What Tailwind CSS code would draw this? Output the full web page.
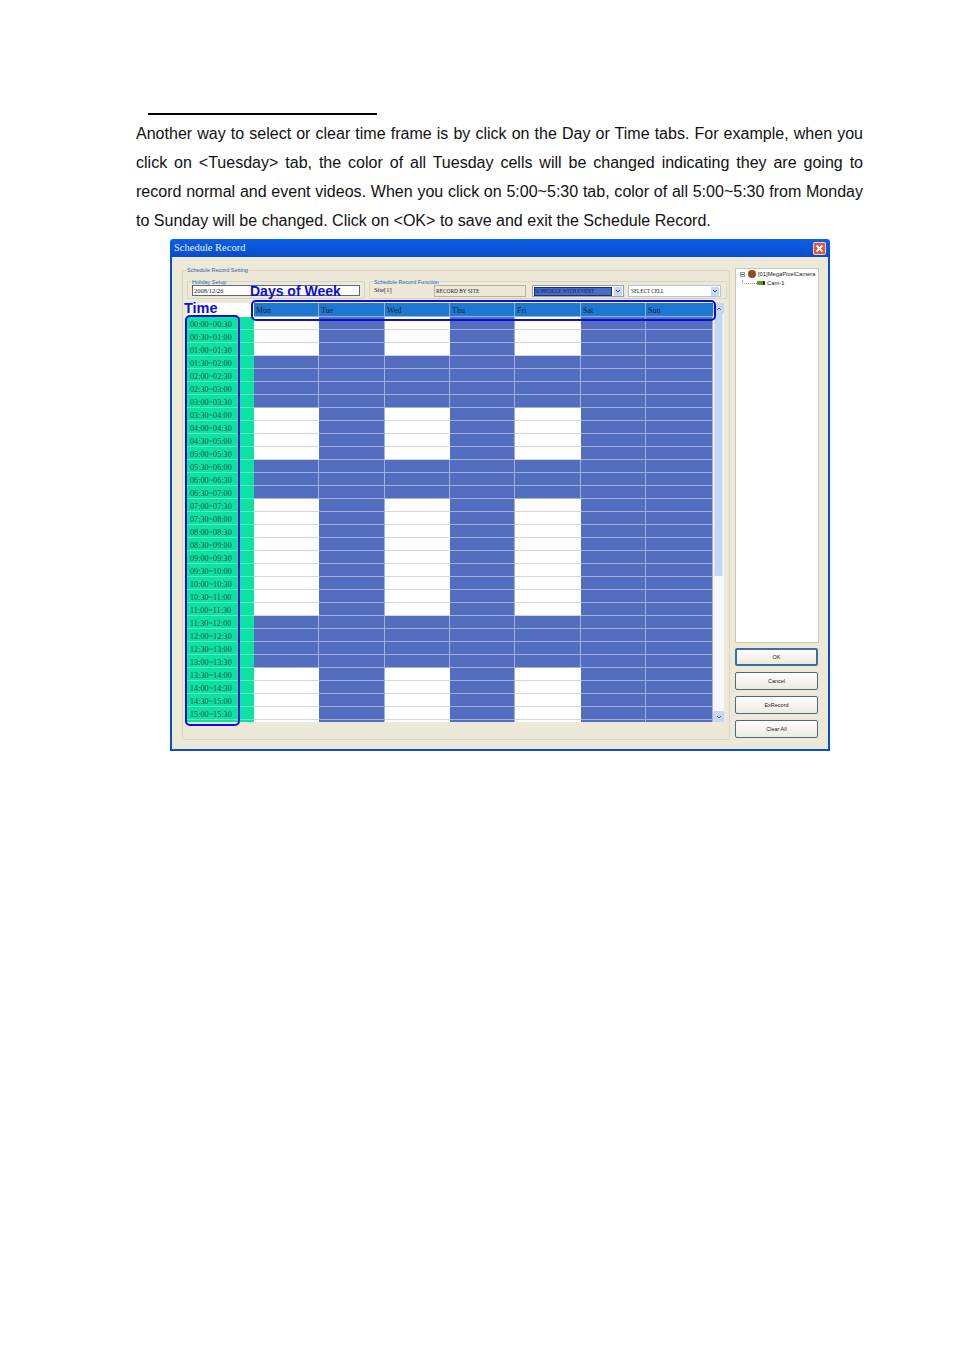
<!doctype html>
<html lang="en">
  <head>
    <meta charset="UTF-8" />
    <title>Schedule Record</title>
    <script src="https://cdn.jsdelivr.net/npm/@tailwindcss/browser@4"></script>
  </head>
  <body class="bg-white">
    <div class="relative w-[954px] h-[1350px] overflow-hidden font-['Liberation_Sans',sans-serif] text-[#111]">
      <div class="ml-[148px] pt-[113px]"><div class="w-[229px] h-[2px] bg-black"></div></div>

      <div class="ml-[136px] mt-[4px] w-[727px] text-[16.05px] leading-[29px]">
        <div class="[text-align-last:justify]">Another way to select or clear time frame is by click on the Day or Time tabs. For example, when you</div>
        <div class="[text-align-last:justify]">click on &lt;Tuesday&gt; tab, the color of all Tuesday cells will be changed indicating they are going to</div>
        <div class="[text-align-last:justify]">record normal and event videos. When you click on 5:00~5:30 tab, color of all 5:00~5:30 from Monday</div>
        <div>to Sunday will be changed. Click on &lt;OK&gt; to save and exit the Schedule Record.</div>
      </div>

      <!-- dialog -->
      <div class="ml-[170px] mt-[4px] w-[660px] h-[512px] border-2 border-t-0 border-[#0a4fd0] rounded-t-[4px] bg-[#ece9d8] flex flex-col">
        <div class="h-[18px] -mx-[2px] px-[4px] rounded-t-[4px] flex items-center justify-between bg-gradient-to-b from-[#0a5fe4] via-[#0658dc] to-[#0a4cc8]">
          <span class="font-['Liberation_Serif',serif] text-[10.5px] text-[#e8f0ff]">Schedule Record</span>
          <span class="w-[13px] h-[13px] rounded-[2px] border border-white/70 bg-[#e2583a] flex items-center justify-center">
            <svg width="9" height="9" viewBox="0 0 9 9"><path d="M1.5 1.5l6 6M7.5 1.5l-6 6" stroke="#fff" stroke-width="1.8" /></svg>
          </span>
        </div>

        <div class="flex">
          <!-- schedule record setting -->
          <div class="relative ml-[10px] mt-[13px] w-[548px] h-[470px] border border-[#d8d4c0] rounded-[3px]">
            <span class="absolute left-[3px] -top-[4px] px-px bg-[#ece9d8] text-[5.5px] leading-[7px] text-[#2a5aa8]">Schedule Record Setting</span>

            <div class="ml-[4px] mt-[10px] flex gap-[4px] h-[18px]">
              <div class="relative w-[178px] border border-[#d8d4c0] rounded-[2px] pl-[4px] pt-[3px]">
                <span class="absolute left-[3px] -top-[3px] px-px bg-[#ece9d8] text-[5.5px] leading-[6px] text-[#2a5aa8]">Holiday Setup</span>
                <div class="w-[168px] h-[11px] border border-[#5b6b7c] bg-white font-['Liberation_Serif',serif] text-[6.5px] leading-[10px] pl-px text-[#222]">2008/12/26</div>
              </div>
              <div class="relative w-[358px] border border-[#d8d4c0] rounded-[2px] flex items-start pl-[4px] pt-[3px]">
                <span class="absolute left-[3px] -top-[3px] px-px bg-[#ece9d8] text-[5.5px] leading-[6px] text-[#2a5aa8]">Schedule Record Function</span>
                <span class="w-[60px] font-['Liberation_Serif',serif] text-[6.5px] leading-[10px] text-[#222]">Site[1]</span>
                <div class="w-[92px] h-[12px] border border-[#b5b2a0] bg-[#ece9d8] font-['Liberation_Serif',serif] text-[5.4px] leading-[10px] pl-px text-[#222] whitespace-nowrap">RECORD BY SITE</div>
                <div class="ml-[6px] w-[92px] h-[12px] border border-[#8ea4c0] bg-white p-px flex items-center justify-between">
                  <span class="w-[78px] h-[9px] bg-[#4a6cc4] border border-[#20306a] font-['Liberation_Serif',serif] text-[5.1px] leading-[7px] text-[#10205a] whitespace-nowrap">SCHEDULE WITH EVENT</span>
                  <span class="w-[8px] h-[9px] bg-[#c6d6f4] rounded-[1px] flex items-center justify-center"><svg width="6" height="4" viewBox="0 0 6 4"><path d="M1 1l2 2 2-2" fill="none" stroke="#3a5a90" stroke-width="1" /></svg></span>
                </div>
                <div class="ml-[4px] w-[93px] h-[12px] border border-[#b8c4d4] bg-white p-px flex items-center justify-between">
                  <span class="pl-px font-['Liberation_Serif',serif] text-[5.2px] leading-[9px] text-[#222] whitespace-nowrap">SELECT CELL</span>
                  <span class="w-[8px] h-[9px] bg-[#c6d6f4] rounded-[1px] flex items-center justify-center"><svg width="6" height="4" viewBox="0 0 6 4"><path d="M1 1l2 2 2-2" fill="none" stroke="#3a5a90" stroke-width="1" /></svg></span>
                </div>
              </div>
            </div>

            <!-- schedule table -->
            <div class="ml-[4px] mt-[4px] flex">
              <div id="table" class="w-[526px] grid grid-cols-[53px_14px_65px_66px_65px_65px_66px_65px_67px] font-['Liberation_Serif',serif]">
                <div class="col-span-2 h-[14px] bg-white"></div>
                <div class="h-[14px] bg-[#1e78d2] border-r border-b border-[#8fb4e4] text-[8px] leading-[16px] pl-[2px] text-[#123]">Mon</div>
                <div class="h-[14px] bg-[#1e78d2] border-r border-b border-[#8fb4e4] text-[8px] leading-[16px] pl-[2px] text-[#123]">Tue</div>
                <div class="h-[14px] bg-[#1e78d2] border-r border-b border-[#8fb4e4] text-[8px] leading-[16px] pl-[2px] text-[#123]">Wed</div>
                <div class="h-[14px] bg-[#1e78d2] border-r border-b border-[#8fb4e4] text-[8px] leading-[16px] pl-[2px] text-[#123]">Thu</div>
                <div class="h-[14px] bg-[#1e78d2] border-r border-b border-[#8fb4e4] text-[8px] leading-[16px] pl-[2px] text-[#123]">Fri</div>
                <div class="h-[14px] bg-[#1e78d2] border-r border-b border-[#8fb4e4] text-[8px] leading-[16px] pl-[2px] text-[#123]">Sat</div>
                <div class="h-[14px] bg-[#1e78d2] border-b border-[#8fb4e4] text-[8px] leading-[16px] pl-[2px] text-[#123]">Sun</div>
              </div>
              <!-- scrollbar -->
              <div class="w-[11px] h-[419px] flex flex-col bg-[#f6f8fc]">
                <div class="h-[11px] bg-[#c6d6f4] rounded-[1px] flex items-center justify-center"><svg width="6" height="4" viewBox="0 0 6 4"><path d="M1 3l2-2 2 2" fill="none" stroke="#3a5a90" stroke-width="1" /></svg></div>
                <div class="h-[262px] mx-px bg-[#c4d6f6] border-x border-[#dbe6fa]"></div>
                <div class="flex-1"></div>
                <div class="h-[11px] bg-[#c6d6f4] rounded-[1px] flex items-center justify-center"><svg width="6" height="4" viewBox="0 0 6 4"><path d="M1 1l2 2 2-2" fill="none" stroke="#3a5a90" stroke-width="1" /></svg></div>
              </div>
            </div>
          </div>

          <!-- camera tree and buttons -->
          <div class="ml-[5px] mt-[11px] w-[84px] flex flex-col">
            <div class="h-[375px] bg-white border border-[#c8c6b4] pl-[4px] pt-px text-[5.8px] text-[#222]">
              <div class="flex items-center gap-[2px] h-[8px]">
                <span class="w-[5px] h-[5px] border border-[#9a9a9a] flex items-center justify-center"><span class="w-[3px] h-px bg-[#555]"></span></span>
                <span class="w-[8px] h-[8px] rounded-full bg-[#8a4f20] ml-px"></span>
                <span class="whitespace-nowrap">[01]MegaPixelCamera</span>
              </div>
              <div class="flex items-center gap-[2px] h-[8px] ml-[2px] mt-px">
                <span class="w-[15px] h-[4px] border-l border-b border-dotted border-[#999] -mt-[3px]"></span>
                <span class="w-[8px] h-[4px] -ml-[2px] rounded-[1px] bg-[#5a9a20] border-r-2 border-[#222]"></span>
                <span>Cam-1</span>
              </div>
            </div>
            <div class="mt-[5px] h-[18px] w-[83px] rounded-[2px] border-2 border-[#3f6f9f] bg-gradient-to-b from-white to-[#ece9de] text-[5.5px] text-[#222] flex items-center justify-center">OK</div>
            <div class="mt-[6px] h-[18px] w-[83px] rounded-[2px] border border-[#4f6a80] bg-gradient-to-b from-white to-[#ece9de] text-[5.5px] text-[#222] flex items-center justify-center">Cancel</div>
            <div class="mt-[6px] h-[18px] w-[83px] rounded-[2px] border border-[#4f6a80] bg-gradient-to-b from-white to-[#ece9de] text-[5.5px] text-[#222] flex items-center justify-center">ExRecord</div>
            <div class="mt-[6px] h-[18px] w-[83px] rounded-[2px] border border-[#4f6a80] bg-gradient-to-b from-white to-[#ece9de] text-[5.5px] text-[#222] flex items-center justify-center">Clear All</div>
          </div>
        </div>
      </div>

      <!-- annotations drawn over the screenshot -->
      <div class="absolute left-[185px] top-[315px] w-[55px] h-[411px] border-2 border-[#0a10d8] rounded-[5px]"></div>
      <div class="absolute left-[251px] top-[300px] w-[465px] h-[21px] border-2 border-[#0a10d8] rounded-[5px]"></div>
      <div class="absolute left-[184px] top-[300px] text-[14.5px] leading-[16px] font-bold text-[#0a10d8]">Time</div>
      <div class="absolute left-[250px] top-[283px] text-[14px] leading-[16px] font-bold text-[#0a10d8]">Days of Week</div>
    </div>

    <script>
      var table = document.getElementById("table");
      var white = [1,1,1,0,0,0,0,1,1,1,1,0,0,0,1,1,1,1,1,1,1,1,1,0,0,0,0,1,1,1,1];

      function pad(n) {
        return (n < 10 ? "0" : "") + n;
      }
      function stamp(half) {
        return pad(Math.floor(half / 2)) + ":" + (half % 2 ? "30" : "00");
      }
      function add(cls, text) {
        var d = document.createElement("div");
        d.className = cls;
        if (text) d.textContent = text;
        table.appendChild(d);
      }

      white.forEach(function (isWhite, i) {
        add("h-[13px] bg-[#0de2a2] border-b border-[#55eac0] text-[8.2px] leading-[16px] pl-[3px] text-[#17523f] whitespace-nowrap", stamp(i) + "~" + stamp(i + 1));
        add("h-[13px] bg-[#0de2a2] border-b border-[#55eac0]");
        for (var day = 0; day < 7; day++) {
          if (isWhite && (day == 0 || day == 2 || day == 4)) add("h-[13px] bg-white border-b border-[#d6d6d6]");
          else add("h-[13px] bg-[#536dbf] border-b border-r border-[#a2b0de]");
        }
      });
      // partial row cut off by the bottom of the table
      add("h-[2px] bg-[#0de2a2]");
      add("h-[2px] bg-[#0de2a2]");
      for (var day = 0; day < 7; day++) {
        add(day % 2 == 0 && day < 6 ? "h-[2px] bg-white" : "h-[2px] bg-[#536dbf] border-r border-[#a2b0de]");
      }
    </script>
  </body>
</html>
